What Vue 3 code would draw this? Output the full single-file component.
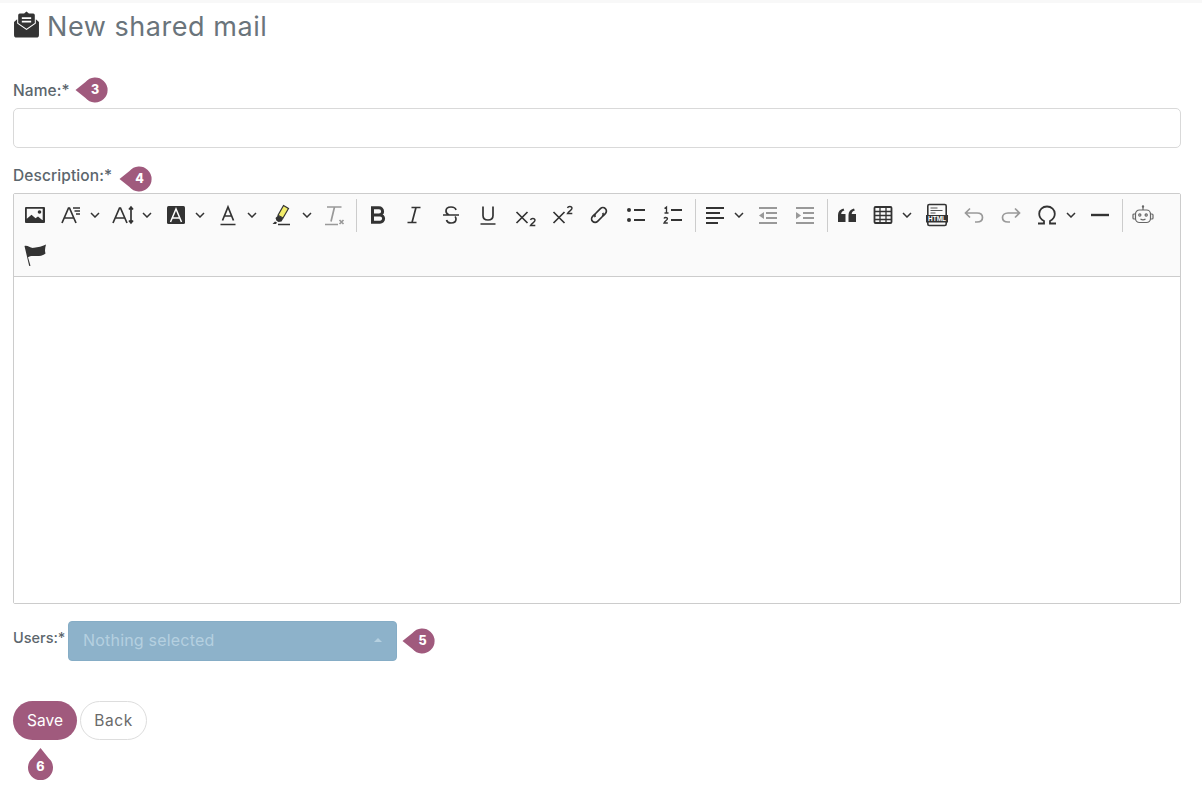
<script setup>
import { ref } from 'vue'

const name = ref('')
</script>

<template>
  <div class="top-strip"></div>
  <main class="page">
    <h1 class="title">
      <svg class="title-icon" viewBox="0 0 26 26" width="27" height="27">
        <path fill="#333" d="M1 10.500 4 8v4l9 6.200 9-6.200V8l3 2.500V23a2.500 2.500 0 0 1-2.500 2.500h-19A2.500 2.500 0 0 1 1 23z" />
        <path fill="#333" fill-rule="evenodd" d="M6.500 2.500h4.200L13 .6l2.300 1.900h4.200A1.500 1.500 0 0 1 21 4v7.500l-8 5.600-8-5.600V4a1.500 1.500 0 0 1 1.500-1.500zM8.500 6v1.800h9V6zm0 3.300v1.800h9V9.300z" />
      </svg>
      <span>New shared mail</span>
    </h1>

    <div class="label-row name-label">
      <label>Name:*</label>
      <span class="badge">
        <svg viewBox="0 0 33 26" width="33" height="26"><path d="M0.500 13 10.500 5A12.500 12.500 0 1 1 10.500 21Z" /></svg>
        <b>3</b>
      </span>
    </div>
    <input v-model="name" class="text-input" type="text" />

    <div class="label-row desc-label">
      <label>Description:*</label>
      <span class="badge">
        <svg viewBox="0 0 33 26" width="33" height="26"><path d="M0.500 13 10.500 5A12.500 12.500 0 1 1 10.500 21Z" /></svg>
        <b>4</b>
      </span>
    </div>

    <section class="editor">
      <div class="toolbar">
        <button class="tb" type="button">
          <svg viewBox="0 0 24 24"><path fill="#333" fill-rule="evenodd" d="M3 4h18a1 1 0 0 1 1 1v14a1 1 0 0 1-1 1H3a1 1 0 0 1-1-1V5a1 1 0 0 1 1-1zm.8 1.800v10l4.700-4 4 3.500 2.500-1.800 4.200 3.500h.5V5.800z" /><circle cx="16.500" cy="9" r="1.800" fill="#333" /></svg>
        </button>

        <button class="tb dd" type="button">
          <svg viewBox="0 0 24 24" class="line"><path d="M3 20 9.500 5h1L17 20M5.500 15h9.500M14 5h7M15.500 8h5.500M17 11h4" /></svg>
          <svg class="chev" viewBox="0 0 10 6"><path d="M1 1l4 4 4-4" /></svg>
        </button>
        <button class="tb dd" type="button">
          <svg viewBox="0 0 24 24" class="line"><path d="M2 20 8.500 5h1L16 20M4.500 15h9.500M20 4v16M18 6.500 20 4l2 2.500M18 17.500l2 2.500 2-2.500" /></svg>
          <svg class="chev" viewBox="0 0 10 6"><path d="M1 1l4 4 4-4" /></svg>
        </button>
        <button class="tb dd" type="button">
          <svg viewBox="0 0 24 24"><rect x="3" y="3" width="18" height="18" rx="1.500" fill="#333" /><path d="M6.500 19 12 6l5.500 13M8.500 15h7" fill="none" stroke="#fff" stroke-width="1.500" /></svg>
          <svg class="chev" viewBox="0 0 10 6"><path d="M1 1l4 4 4-4" /></svg>
        </button>
        <button class="tb dd" type="button">
          <svg viewBox="0 0 24 24" class="line"><path d="M6.500 17.500 12 4l5.500 13.500M8.500 13h7M4.500 21.500h15" /></svg>
          <svg class="chev" viewBox="0 0 10 6"><path d="M1 1l4 4 4-4" /></svg>
        </button>
        <button class="tb dd dd-wide" type="button">
          <svg viewBox="0 0 24 24">
            <path fill="#f2ec6a" stroke="#333" stroke-width="1.200" d="M14.500 2.500 19.500 5.500l-5.500 9.500-5-2.800z" />
            <path fill="#333" d="M9 12.500l5.300 3-1.800 3-3 .5-2-1.200-1-2.800zM3.500 21l2.500-2.500 2 1-1 1.500z" />
            <path stroke="#333" stroke-width="1.500" d="M9 21.500h12" />
          </svg>
          <svg class="chev" viewBox="0 0 10 6"><path d="M1 1l4 4 4-4" /></svg>
        </button>
        <button class="tb" type="button">
          <svg viewBox="0 0 24 24" class="line off"><path d="M5 4h14.500M12.500 4 9 18.500M3 21.500h13M17.500 17l4 4M21.500 17l-4 4" /></svg>
        </button>
        <span class="sep"></span>

        <button class="tb" type="button">
          <svg viewBox="0 0 24 24"><path fill="none" stroke="#333" stroke-width="3" d="M7.500 12h6.500a3.600 3.600 0 0 0 0-7.200H7.500v14.400h7.500a3.600 3.600 0 0 0 0-7.200" /></svg>
        </button>
        <button class="tb" type="button">
          <svg viewBox="0 0 24 24" class="line"><path d="M9.500 4.500h9M14 4.500l-4 15M5.500 19.500h9" /></svg>
        </button>
        <button class="tb" type="button">
          <svg viewBox="0 0 24 24" class="line"><path d="M4 12h16M17 7c-.5-2-2.500-3-5-3-3 0-5 1.500-5 4 0 1.500 1 3 3 4M7.500 17c.5 2 2.500 3 4.500 3 3 0 5-1.500 5-4 0-1-.3-1.800-1-2.500" /></svg>
        </button>
        <button class="tb" type="button">
          <svg viewBox="0 0 24 24" class="line"><path d="M7 3.500v9c0 3 2 4.500 5 4.500s5-1.500 5-4.500v-9M4.500 21h15" /></svg>
        </button>
        <button class="tb" type="button">
          <svg viewBox="0 0 24 24" class="line"><path d="M3.500 9l11 11M14.500 9l-11 11" /><path d="M17.500 17c.3-1 1.200-1.500 2.300-1.500 1.300 0 2.200.8 2.200 1.800 0 2-3.200 2.700-4.500 5.200h4.800" stroke-width="1.400" /></svg>
        </button>
        <button class="tb" type="button">
          <svg viewBox="0 0 24 24" class="line"><path d="M3.500 9l11 11M14.500 9l-11 11" /><path d="M17.500 5c.3-1 1.200-1.500 2.300-1.500 1.300 0 2.200.8 2.200 1.800 0 2-3.200 2.700-4.500 5.200h4.800" stroke-width="1.400" /></svg>
        </button>
        <button class="tb" type="button">
          <svg viewBox="0 0 24 24" class="line"><path transform="rotate(-45 12 12)" d="M10 8.500H6.500a3.500 3.500 0 0 0 0 7H13a3.500 3.500 0 0 0 3.200-2.200M14 15.500h3.500a3.500 3.500 0 0 0 0-7H11a3.500 3.500 0 0 0-3.200 2.200" /></svg>
        </button>
        <button class="tb" type="button">
          <svg viewBox="0 0 24 24"><circle cx="5" cy="7" r="2" fill="#333" /><circle cx="5" cy="17" r="2" fill="#333" /><path d="M10 7h11M10 17h11" stroke="#333" stroke-width="1.800" /></svg>
        </button>
        <button class="tb" type="button">
          <svg viewBox="0 0 24 24" class="line"><path d="M3.500 5.500 5.500 4v6M3.500 10h4M3 15.500c.3-.8 1-1 1.800-1 1 0 1.700.5 1.700 1.300 0 1.400-2.500 2-3.500 4.200h3.800" stroke-width="1.300" /><path d="M10 7h11M10 17h11" stroke-width="1.800" /></svg>
        </button>
        <span class="sep"></span>

        <button class="tb dd dd-align" type="button">
          <svg viewBox="0 0 24 24" class="line"><path d="M3 5h18M3 10h14M3 15h18M3 20h12" stroke-width="1.800" /></svg>
          <svg class="chev" viewBox="0 0 10 6"><path d="M1 1l4 4 4-4" /></svg>
        </button>
        <button class="tb" type="button">
          <svg viewBox="0 0 24 24"><path d="M3 5h18M10 10h11M10 15h11M3 20h18" stroke="#999" stroke-width="1.800" /><path d="M8 9v7l-5-3.500z" fill="#999" /></svg>
        </button>
        <button class="tb" type="button">
          <svg viewBox="0 0 24 24"><path d="M3 5h18M10 10h11M10 15h11M3 20h18" stroke="#999" stroke-width="1.800" /><path d="M3 9v7l5-3.500z" fill="#999" /></svg>
        </button>
        <span class="sep"></span>

        <button class="tb" type="button">
          <svg viewBox="0 0 24 24"><path fill="#333" d="M3 19v-7c0-3.500 2-5.500 5.500-6.500l.8 2c-2 .7-3 1.800-3.100 3.500H10.500v8zM13.500 19v-7c0-3.500 2-5.500 5.500-6.500l.8 2c-2 .7-3 1.800-3.100 3.500H21v8z" /></svg>
        </button>
        <button class="tb dd" type="button">
          <svg viewBox="0 0 24 24"><rect x="3.500" y="4" width="17" height="16" rx="1" fill="none" stroke="#333" stroke-width="1.800" /><path d="M3.500 8.500h17M3.500 12.500h17M3.500 16.500h17M9 4v16M15 4v16" stroke="#333" stroke-width="1.300" /></svg>
          <svg class="chev" viewBox="0 0 10 6"><path d="M1 1l4 4 4-4" /></svg>
        </button>
        <button class="tb" type="button">
          <svg viewBox="0 0 24 24">
            <rect x="2.800" y="1.500" width="18.400" height="21" rx="1.500" fill="none" stroke="#333" stroke-width="1.600" />
            <path d="M5.500 5h7M5.500 7.500h12M5.500 10h5" stroke="#555" stroke-width="1.200" />
            <rect x="1" y="12" width="22" height="7.500" fill="#333" />
            <text x="12" y="18.300" text-anchor="middle" class="html-text">HTML</text>
          </svg>
        </button>
        <button class="tb" type="button">
          <svg viewBox="0 0 24 24" class="line off"><path d="M8 5.500 3.500 10 8 14.500M3.500 10H15c3.500 0 5.500 2 5.500 4.500S18.500 19 15 19h-2" /></svg>
        </button>
        <button class="tb" type="button">
          <svg viewBox="0 0 24 24" class="line off"><path d="M16 5.500 20.500 10 16 14.500M20.500 10H9c-3.500 0-5.500 2-5.500 4.500S5.500 19 9 19h2" /></svg>
        </button>
        <button class="tb dd" type="button">
          <svg viewBox="0 0 24 24" class="line"><path d="M3 20.500h6v-2.500c-3-1.500-4.800-4-4.800-7.200C4.200 6.500 7.500 3.500 12 3.500s7.800 3 7.800 7.300c0 3.200-1.800 5.700-4.800 7.200v2.500h6" stroke-width="1.800" /></svg>
          <svg class="chev" viewBox="0 0 10 6"><path d="M1 1l4 4 4-4" /></svg>
        </button>
        <button class="tb" type="button">
          <svg viewBox="0 0 24 24"><path d="M3 12h18" stroke="#333" stroke-width="2.400" /></svg>
        </button>
        <span class="sep"></span>

        <button class="tb" type="button">
          <svg viewBox="0 0 24 24" class="line thin">
            <rect x="4.500" y="7" width="15" height="12.500" rx="4" />
            <path d="M12 7V4M4.500 11H3a1 1 0 0 0-1 1v3a1 1 0 0 0 1 1h1.500M19.500 11H21a1 1 0 0 1 1 1v3a1 1 0 0 1-1 1h-1.500M9.500 16c1.500 1 3.500 1 5 0" />
            <circle cx="12" cy="3.500" r="0.600" />
            <circle cx="8.800" cy="12" r="1.100" />
            <circle cx="15.200" cy="12" r="1.100" />
          </svg>
        </button>
        <button class="tb" type="button">
          <svg viewBox="0 0 24 24"><path fill="#333" d="M1.500 3c3.500-1 5.500 2.500 9.500 1.800 4-.6 8-1.300 12-3.300-.8 3-1.500 6-.5 9-3.500 3-8 2.700-11.500 2.500-2.500-.2-4.500.2-6 1.200l2.500 8.500-1.300.4z" /></svg>
        </button>
      </div>
      <div class="editor-body"></div>
    </section>

    <div class="users-row">
      <label>Users:*</label>
      <div class="select">
        <span>Nothing selected</span>
        <i class="caret"></i>
      </div>
      <span class="badge">
        <svg viewBox="0 0 33 26" width="33" height="26"><path d="M0.500 13 10.500 5A12.500 12.500 0 1 1 10.500 21Z" /></svg>
        <b>5</b>
      </span>
    </div>

    <div class="actions">
      <button class="btn btn-save" type="button">Save</button>
      <button class="btn btn-back" type="button">Back</button>
      <span class="badge badge-up">
        <svg viewBox="0 0 33 26" width="33" height="26"><path d="M0.500 13 10.500 5A12.500 12.500 0 1 1 10.500 21Z" /></svg>
        <b>6</b>
      </span>
    </div>
  </main>
</template>

<style>
body {
  background: #fff;
}
</style>

<style scoped>
.top-strip {
  height: 3px;
  background: #f8f8f8;
}

.page {
  padding: 0 21px 0 13px;
  font-family: Inter, "Open Sans", sans-serif;
  color: #5c666d;
}

.title {
  display: flex;
  align-items: center;
  gap: 7px;
  height: 46px;
  margin: 0;
  font-size: 27px;
  font-weight: 400;
  letter-spacing: 0.55px;
  color: #6a747b;
}

.title-icon {
  flex: none;
  margin-top: -3px;
}

.label-row {
  display: flex;
  align-items: center;
  height: 26px;
  font-size: 15.5px;
  font-weight: 500;
  letter-spacing: 0.1px;
}

.name-label {
  margin-top: 28px;
  gap: 5px;
}

.desc-label {
  margin-top: 18px;
  gap: 7px;
}

.desc-label label {
  margin-bottom: 8px;
}

.text-input {
  display: block;
  box-sizing: border-box;
  width: 100%;
  height: 40px;
  margin-top: 5px;
  border: 1px solid #d9d9d9;
  border-radius: 5px;
  background: #fff;
  outline: none;
}

.badge {
  position: relative;
  display: inline-flex;
  flex: none;
  width: 33px;
  height: 26px;
}

.badge svg {
  display: block;
  fill: #a05a7d;
}

.badge b {
  position: absolute;
  top: 0;
  left: 8px;
  right: 0;
  font-size: 12.5px;
  line-height: 26px;
  font-weight: 800;
  text-align: center;
  color: #fff;
}

.badge-up {
  position: absolute;
  left: 11px;
  top: 50px;
}

.badge-up svg {
  transform: rotate(90deg);
}

.badge-up b {
  left: 0;
  top: 3px;
}

.editor {
  margin-top: 1px;
  border: 1px solid #ccc;
  border-radius: 2px;
}

.toolbar {
  display: flex;
  flex-wrap: wrap;
  align-items: center;
  padding: 1px 1.5px;
  background: #fafafa;
  border-bottom: 1px solid #ccc;
}

.tb {
  display: inline-flex;
  align-items: center;
  justify-content: center;
  box-sizing: border-box;
  width: 37px;
  height: 40px;
  padding: 0 0 0 1.5px;
  border: 0;
  background: none;
}

.tb > svg:first-child {
  width: 24px;
  height: 24px;
  flex: none;
}

.tb.dd {
  width: 52.5px;
  justify-content: flex-start;
  padding-left: 6px;
  gap: 7px;
}

.tb.dd-wide {
  gap: 9px;
}

.tb.dd-align {
  padding-left: 7px;
}

.chev {
  width: 10px;
  height: 6px;
  fill: none;
  stroke: #333;
  stroke-width: 1.5;
}

.line {
  fill: none;
  stroke: #333;
  stroke-width: 1.7;
}

.line.off {
  stroke: #999;
}

.line.thin {
  stroke: #666;
  stroke-width: 1.2;
}

.html-text {
  font-family: "Liberation Sans", sans-serif;
  font-size: 6.5px;
  font-weight: 700;
  fill: #fff;
}

.sep {
  width: 1px;
  height: 33px;
  margin: 0 0.5px 0 4px;
  background: #ccc;
}

.editor-body {
  height: 326px;
  background: #fff;
}

.users-row {
  display: flex;
  align-items: center;
  margin-top: 17px;
  font-size: 14.5px;
  font-weight: 500;
}

.users-row label {
  width: 55px;
  margin-top: -8px;
}

.select {
  display: flex;
  align-items: center;
  justify-content: space-between;
  box-sizing: border-box;
  width: 329px;
  height: 40px;
  padding: 0 14px 2px;
  border: 1px solid #86adc6;
  border-radius: 4px;
  background: #8db2ca;
  color: #b5d0e0;
  font-size: 16px;
  font-weight: 400;
  letter-spacing: 0.2px;
}

.caret {
  width: 0;
  height: 0;
  border-left: 4px solid transparent;
  border-right: 4px solid transparent;
  border-bottom: 4px solid #b5d0e0;
}

.users-row .badge {
  margin-left: 5px;
}

.actions {
  position: relative;
  display: flex;
  gap: 3px;
  margin-top: 40px;
  padding-bottom: 49px;
}

.btn {
  box-sizing: border-box;
  height: 39px;
  border-radius: 20px;
  font-family: inherit;
  font-size: 15.5px;
  font-weight: 400;
}

.btn-save {
  width: 64px;
  border: 0;
  background: #a05a7d;
  color: #fff;
}

.btn-back {
  width: 67px;
  border: 1px solid #ddd;
  background: #fff;
  color: #6a6a6a;
  letter-spacing: 0.6px;
}
</style>
